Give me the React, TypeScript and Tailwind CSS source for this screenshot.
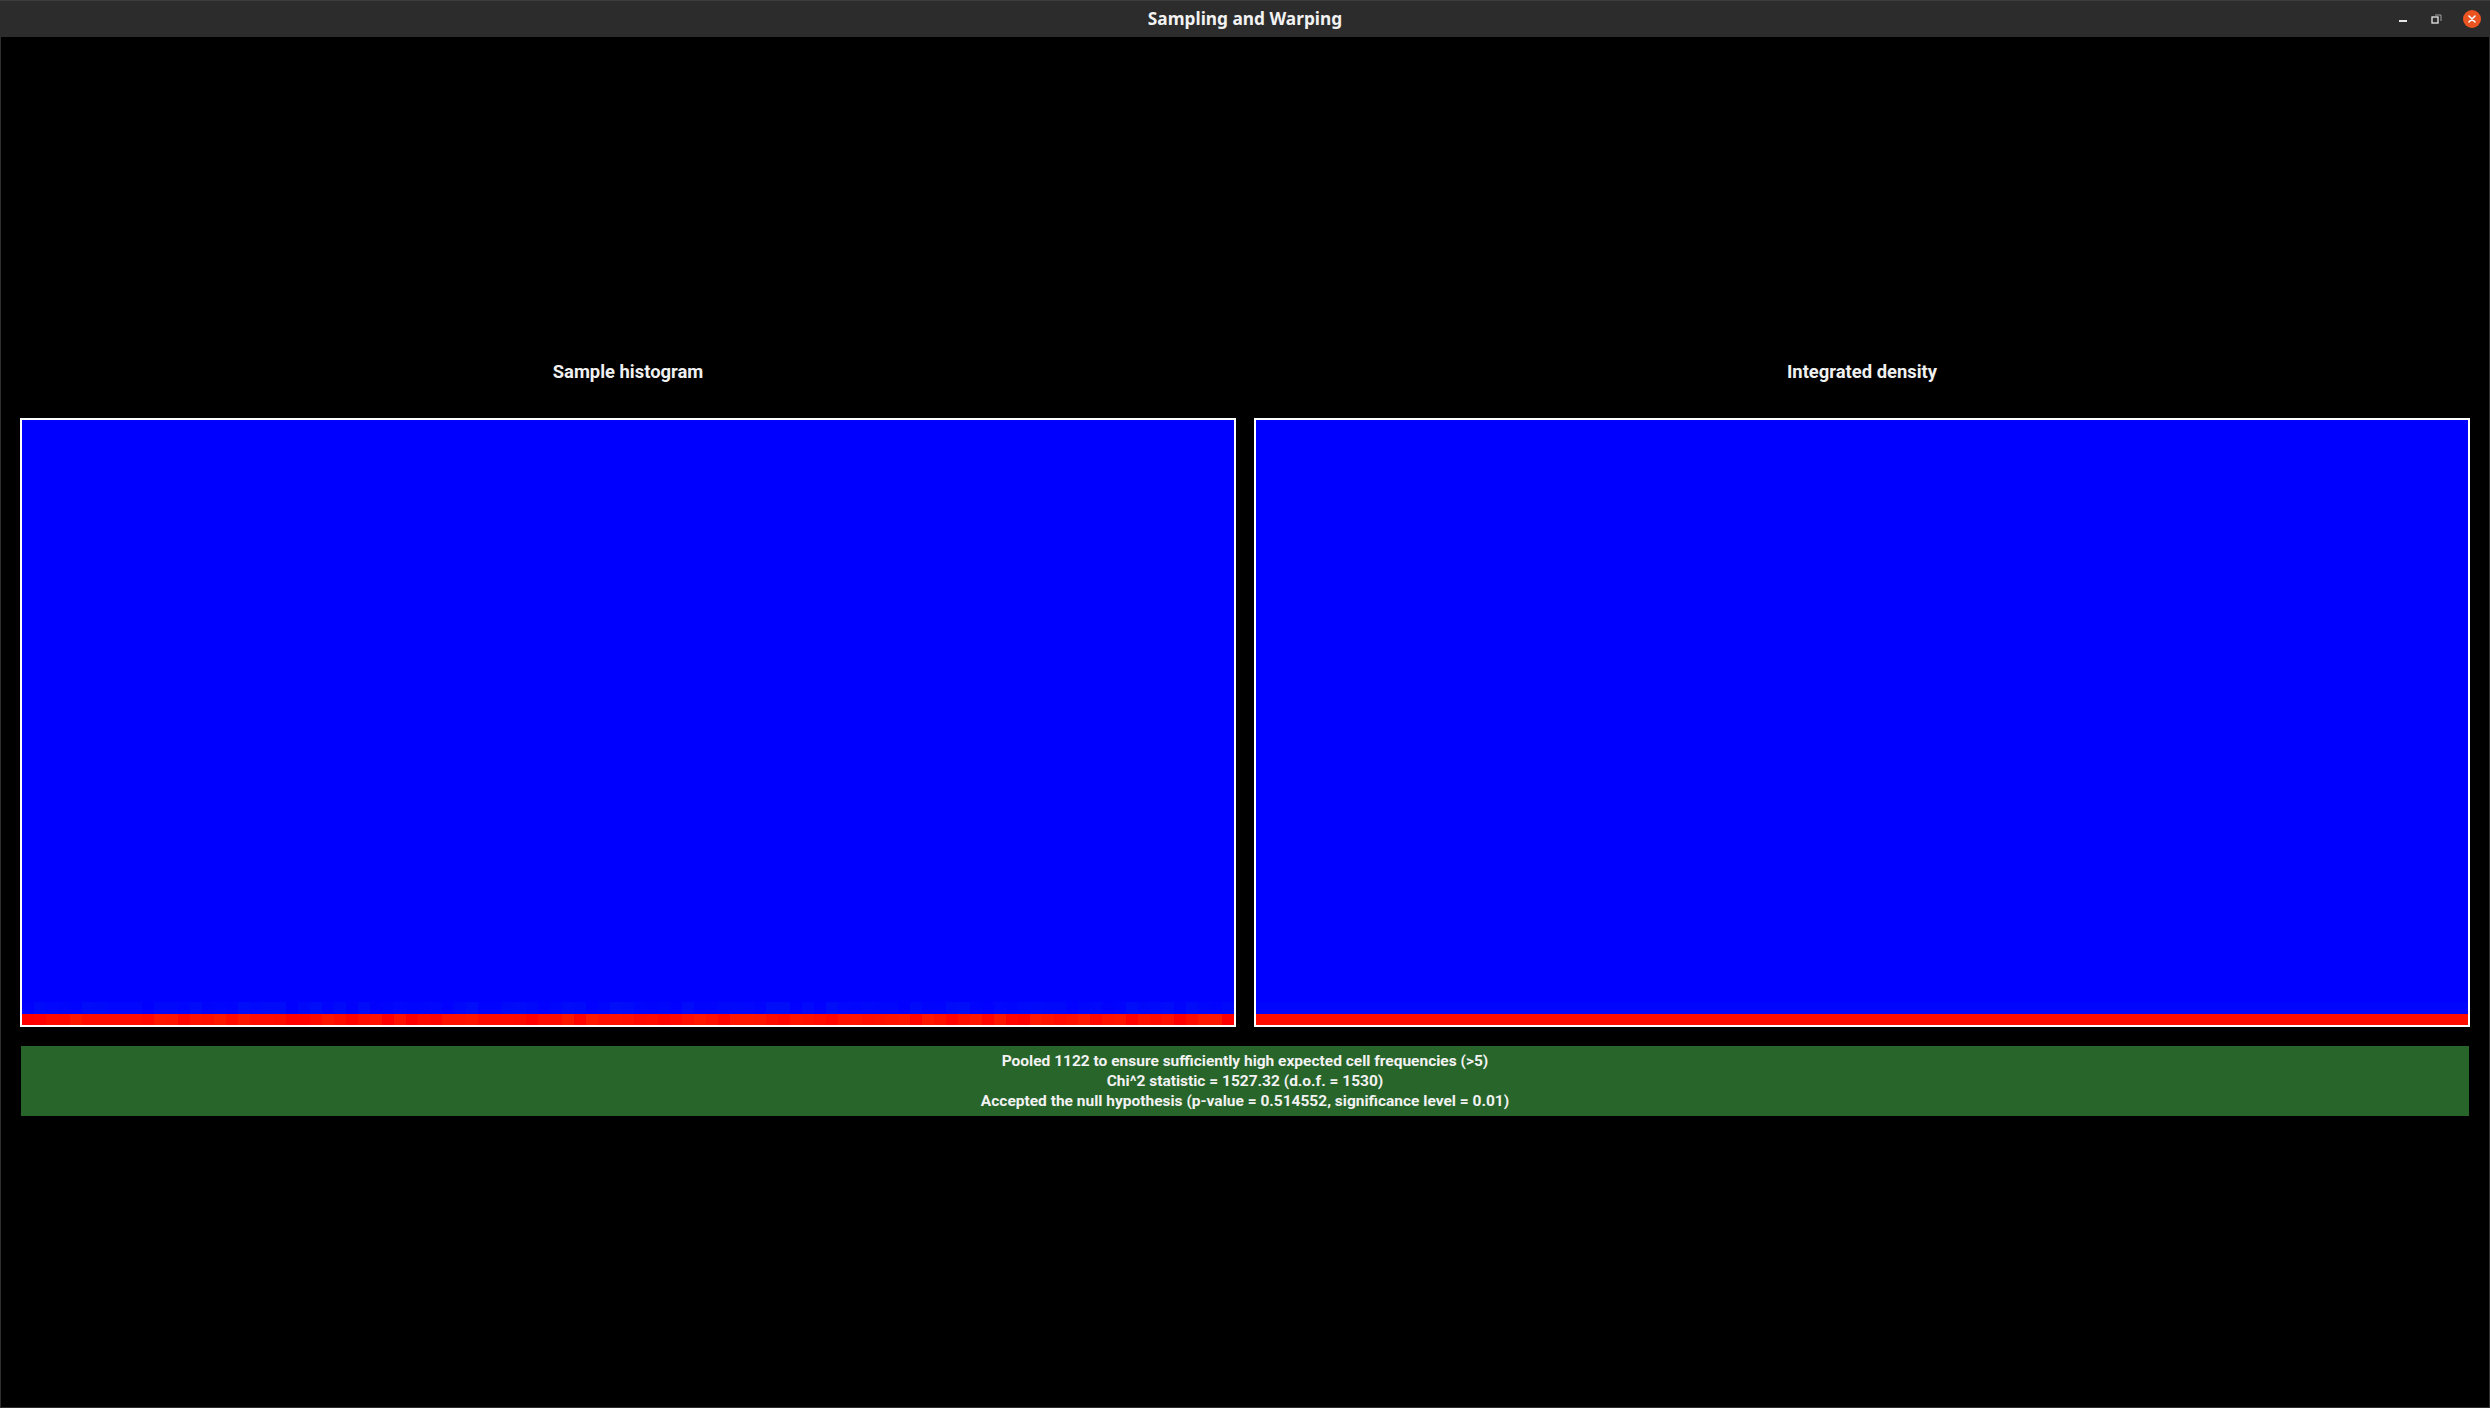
import React from "react";

function shade(i: number, seed: number) {
  const x = Math.sin(i * 12.9898 + seed * 78.233) * 43758.5453;
  return x - Math.floor(x);
}

function Panel({ varied }: { varied: boolean }) {
  const cells = Array.from({ length: 101 }, (_, i) => i);
  return (
    <div className="h-[609px] border-2 border-white bg-[#0000ff] flex flex-col justify-end">
      <div className="h-[12px] flex">
        {cells.map((i) => {
          const v = varied ? Math.floor(shade(i, 1) * 14) : 6;
          return (
            <div
              key={i}
              className="flex-1"
              style={{ backgroundColor: `rgb(0, ${v}, ${255 - Math.floor(v / 2)})` }}
            />
          );
        })}
      </div>
      <div className="h-[11px] flex">
        {cells.map((i) => {
          const v = varied ? Math.floor(shade(i, 2) * 26) : 12;
          return (
            <div
              key={i}
              className="flex-1"
              style={{ backgroundColor: `rgb(255, ${v}, 0)` }}
            />
          );
        })}
      </div>
    </div>
  );
}

export default function App() {
  return (
    <div className="w-[2490px] h-[1408px] bg-black flex flex-col overflow-hidden">
      <div className="h-[37px] shrink-0 bg-[#2c2c2c] border-t border-[#3c3c3c] relative flex items-center justify-center">
        <span
          className="text-[#f2f2f2] font-bold text-[17.3px]"
          style={{ fontFamily: "'Noto Sans', 'DejaVu Sans', sans-serif" }}
        >
          Sampling and Warping
        </span>
        <div className="absolute right-[9px] top-0 h-full flex items-center">
          <div className="w-[34px] flex justify-center">
            <div className="w-[8px] h-[2px] bg-[#e8e8e8] mt-[4px]" />
          </div>
          <div className="w-[34px] flex justify-center">
            <svg width="12" height="12" viewBox="0 0 12 12">
              <rect x="1" y="4" width="6" height="6" fill="none" stroke="#e8e8e8" strokeWidth="1.3" />
              <path d="M4 2 H10 V8" fill="none" stroke="#a0a0a0" strokeWidth="1" />
            </svg>
          </div>
          <div className="w-[18px] h-[18px] rounded-full bg-[#e95420] flex items-center justify-center ml-[9px]">
            <svg width="10" height="10" viewBox="0 0 10 10">
              <path d="M2 2 L8 8 M8 2 L2 8" stroke="#ffffff" strokeWidth="1.6" strokeLinecap="round" />
            </svg>
          </div>
        </div>
      </div>
      <div
        className="flex-1 border-x border-b border-[#2e2e2e] px-[19px] pt-[315px]"
        style={{ fontFamily: "Roboto, 'Liberation Sans', sans-serif" }}
      >
        <div className="grid grid-cols-2 gap-[18px]">
          <div className="flex flex-col">
            <div className="h-[40px] flex items-center justify-center text-[18.4px] font-bold text-[#f0f0f0]">
              Sample histogram
            </div>
            <div className="h-[26px]" />
            <Panel varied={true} />
          </div>
          <div className="flex flex-col">
            <div className="h-[40px] flex items-center justify-center text-[18.4px] font-bold text-[#f0f0f0]">
              Integrated density
            </div>
            <div className="h-[26px]" />
            <Panel varied={false} />
          </div>
        </div>
        <div className="mt-[19px] mx-[1px] h-[70px] bg-[#28652b] py-[5px] flex flex-col items-center text-[15.5px] font-bold text-[#f2f2f2] leading-[20px]">
          <div>Pooled 1122 to ensure sufficiently high expected cell frequencies (&gt;5)</div>
          <div>Chi^2 statistic = 1527.32 (d.o.f. = 1530)</div>
          <div>Accepted the null hypothesis (p-value = 0.514552, significance level = 0.01)</div>
        </div>
      </div>
    </div>
  );
}
